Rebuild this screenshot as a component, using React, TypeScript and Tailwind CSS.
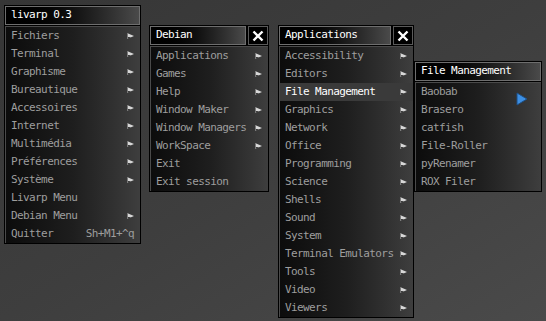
import React from 'react';

type Item = { label: string; sub?: boolean; hint?: string; active?: boolean };

interface MenuProps {
  title: string;
  items: Item[];
  closable?: boolean;
  className: string;
}

const font = { fontFamily: '"DejaVu Sans Mono", "Liberation Mono", monospace' };

const Arrow = () => (
  <svg width="7" height="6" viewBox="0 0 7 6" className="shrink-0">
    <polygon points="0,0 7,3 0,6" fill="#d8d8d8" />
    <rect x="0" y="0" width="1" height="6" fill="#7a7a7a" />
    <polygon points="1,4 4,4 1,6" fill="#3a3a3a" />
  </svg>
);

const Menu: React.FC<MenuProps> = ({ title, items, closable, className }) => (
  <div className={`absolute bg-black p-px flex flex-col gap-px ${className}`} style={font}>
    {/* title row */}
    <div className="flex gap-[2px] h-[19px]">
      <div className="flex-1 flex items-center pl-[5px] border border-[#6e6e6e] bg-gradient-to-r from-black via-[#111] to-[#4a4a4a] text-white text-[11px] tracking-[-0.6px]">
        {title}
      </div>
      {closable && (
        <div className="w-[20px] flex items-center justify-center border border-[#5a5a5a] bg-black">
          <svg width="12" height="12" viewBox="0 0 12 12">
            <path d="M1.5 1.5 L10.5 10.5 M10.5 1.5 L1.5 10.5" stroke="#fff" strokeWidth="2.4" />
          </svg>
        </div>
      )}
    </div>
    {/* items */}
    <div className="flex flex-col border-l border-t border-[#4a4a4a] bg-gradient-to-r from-[#0c0c0c] via-[#1e1e1e] to-[#3e3e3e]">
      {items.map((it) => (
        <div
          key={it.label}
          className={`h-[18px] flex items-center justify-between pl-[5px] pr-[6px] text-[11px] tracking-[-0.6px] ${
            it.active ? 'bg-[#3a3a3a] text-white' : 'text-[#9e9e9e]'
          }`}
        >
          <span>{it.label}</span>
          {it.sub && <Arrow />}
          {it.hint && <span>{it.hint}</span>}
        </div>
      ))}
    </div>
  </div>
);

const livarp: Item[] = [
  { label: 'Fichiers', sub: true },
  { label: 'Terminal', sub: true },
  { label: 'Graphisme', sub: true },
  { label: 'Bureautique', sub: true },
  { label: 'Accessoires', sub: true },
  { label: 'Internet', sub: true },
  { label: 'Multimédia', sub: true },
  { label: 'Préférences', sub: true },
  { label: 'Système', sub: true },
  { label: 'Livarp Menu' },
  { label: 'Debian Menu', sub: true },
  { label: 'Quitter', hint: 'Sh+M1+^q' },
];

const debian: Item[] = [
  { label: 'Applications', sub: true },
  { label: 'Games', sub: true },
  { label: 'Help', sub: true },
  { label: 'Window Maker', sub: true },
  { label: 'Window Managers', sub: true },
  { label: 'WorkSpace', sub: true },
  { label: 'Exit' },
  { label: 'Exit session' },
];

const apps: Item[] = [
  'Accessibility',
  'Editors',
  'File Management',
  'Graphics',
  'Network',
  'Office',
  'Programming',
  'Science',
  'Shells',
  'Sound',
  'System',
  'Terminal Emulators',
  'Tools',
  'Video',
  'Viewers',
].map((label) => ({ label, sub: true, active: label === 'File Management' }));

const files: Item[] = ['Baobab', 'Brasero', 'catfish', 'File-Roller', 'pyRenamer', 'ROX Filer'].map((label) => ({ label }));

export default function App() {
  return (
    <div className="relative w-[546px] h-[321px] overflow-hidden bg-gradient-to-br from-[#363636] via-[#3e3e3e] to-[#4a4a4a]">
      <Menu title="livarp 0.3" items={livarp} className="left-[4px] top-[5px] w-[137px]" />
      <Menu title="Debian" items={debian} closable className="left-[149px] top-[25px] w-[120px]" />
      <Menu title="Applications" items={apps} closable className="left-[278px] top-[25px] w-[136px]" />
      <Menu title="File Management" items={files} className="left-[414px] top-[61px] w-[128px]" />
      {/* pointer */}
      <svg width="12" height="14" viewBox="0 0 12 14" className="absolute left-[516px] top-[92px]">
        <polygon points="1,1 11,7 1,13" fill="#3d8fe3" stroke="#1d4f86" strokeWidth="1" />
      </svg>
    </div>
  );
}
